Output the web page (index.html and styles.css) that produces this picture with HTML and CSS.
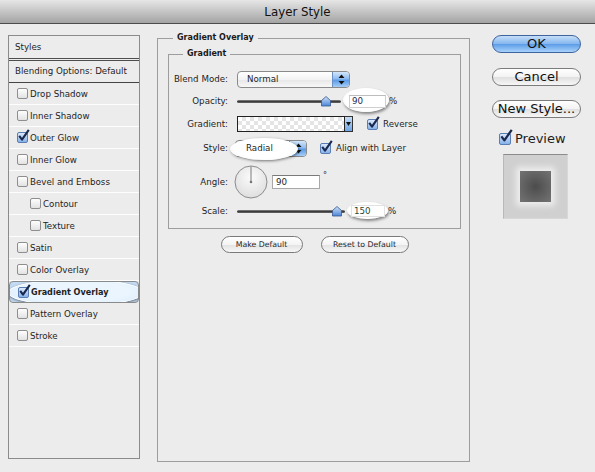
FILE: index.html
```html
<!DOCTYPE html>
<html>
<head>
<meta charset="utf-8">
<title>Layer Style</title>
<link rel="stylesheet" href="styles.css">
</head>
<body>
<div class="titlebar">Layer Style</div>
<div class="content">
  <div class="sidebar">
    <div class="side-head">Styles</div>
    <div class="side-blend">Blending Options: Default</div>
    <div class="side-row"><span class="cb"></span><span class="lbl">Drop Shadow</span></div>
    <div class="side-row"><span class="cb"></span><span class="lbl">Inner Shadow</span></div>
    <div class="side-row"><span class="cb on"><svg class="ck" viewBox="0 0 13 13" width="13" height="13"><path d="M2.2 6.8 L5 10.6 L11.8 0.8" fill="none" stroke="#1a2850" stroke-width="2.1" stroke-linejoin="round"/></svg></span><span class="lbl">Outer Glow</span></div>
    <div class="side-row"><span class="cb"></span><span class="lbl">Inner Glow</span></div>
    <div class="side-row"><span class="cb"></span><span class="lbl">Bevel and Emboss</span></div>
    <div class="side-row sub"><span class="cb"></span><span class="lbl">Contour</span></div>
    <div class="side-row sub"><span class="cb"></span><span class="lbl">Texture</span></div>
    <div class="side-row"><span class="cb"></span><span class="lbl">Satin</span></div>
    <div class="side-row"><span class="cb"></span><span class="lbl">Color Overlay</span></div>
    <div class="side-row sel"><span class="side-halo"></span><span class="cb on"><svg class="ck" viewBox="0 0 13 13" width="13" height="13"><path d="M2.2 6.8 L5 10.6 L11.8 0.8" fill="none" stroke="#1a2850" stroke-width="2.1" stroke-linejoin="round"/></svg></span><span class="lbl">Gradient Overlay</span></div>
    <div class="side-row"><span class="cb"></span><span class="lbl">Pattern Overlay</span></div>
    <div class="side-row"><span class="cb"></span><span class="lbl">Stroke</span></div>
  </div>

  <div class="main">
    <fieldset class="outer">
      <legend>Gradient Overlay</legend>
      <fieldset class="inner">
        <legend>Gradient</legend>
        <div class="form">
          <label>Blend Mode:</label>
          <div class="ctrl">
            <div class="sel sel-normal"><span class="sel-text">Normal</span><span class="step"><svg viewBox="0 0 7 11" width="7" height="11"><path d="M3.5 0.5 L6.5 4 L0.5 4 Z M0.5 7 L6.5 7 L3.5 10.5 Z" fill="#111"/></svg></span></div>
          </div>

          <label>Opacity:</label>
          <div class="ctrl">
            <svg class="slider" viewBox="0 0 104 12" width="104" height="12"><defs><linearGradient id="trk" x1="0" y1="0" x2="0" y2="1"><stop offset="0" stop-color="#8a8a8a"/><stop offset="0.5" stop-color="#3c3c3c"/><stop offset="1" stop-color="#6a6a6a"/></linearGradient><linearGradient id="thm" x1="0" y1="0" x2="0" y2="1"><stop offset="0" stop-color="#cfe2f8"/><stop offset="1" stop-color="#4b86d6"/></linearGradient></defs><rect x="0" y="5" width="104" height="3" rx="1.5" fill="url(#trk)"/><path d="M84.5 11 L84.5 5.5 L89 1.5 L93.5 5.5 L93.5 11 Z" fill="url(#thm)" stroke="#35598f" stroke-width="0.8"/></svg>
            <span class="halo halo-a"><span class="inp inp-a">90</span></span>
            <span class="pct pct-a">%</span>
          </div>

          <label>Gradient:</label>
          <div class="ctrl">
            <span class="swatch"></span><span class="swarrow"><svg viewBox="0 0 5 4" width="5" height="4"><path d="M0 0 L5 0 L2.5 4 Z" fill="#111"/></svg></span>
            <span class="cb on cb-rev"><svg class="ck" viewBox="0 0 13 13" width="13" height="13"><path d="M2.2 6.8 L5 10.6 L11.8 0.8" fill="none" stroke="#1a2850" stroke-width="2.1" stroke-linejoin="round"/></svg></span><span class="cb-text">Reverse</span>
          </div>

          <label>Style:</label>
          <div class="ctrl">
            <div class="sel-wrap"><div class="sel sel-radial"><span class="sel-text">Radial</span><span class="step"><svg viewBox="0 0 7 11" width="7" height="11"><path d="M3.5 0.5 L6.5 4 L0.5 4 Z M0.5 7 L6.5 7 L3.5 10.5 Z" fill="#111"/></svg></span></div></div>
            <span class="cb on cb-align"><svg class="ck" viewBox="0 0 13 13" width="13" height="13"><path d="M2.2 6.8 L5 10.6 L11.8 0.8" fill="none" stroke="#1a2850" stroke-width="2.1" stroke-linejoin="round"/></svg></span><span class="cb-text">Align with Layer</span>
          </div>

          <label>Angle:</label>
          <div class="ctrl">
            <svg class="dial" viewBox="0 0 34 34" width="34" height="34"><defs><radialGradient id="dg" cx="0.5" cy="0.35" r="0.7"><stop offset="0" stop-color="#fbfbfb"/><stop offset="1" stop-color="#dcdcdc"/></radialGradient></defs><circle cx="17" cy="17" r="16" fill="url(#dg)" stroke="#8c8c8c" stroke-width="1"/><line x1="17" y1="1.5" x2="17" y2="17" stroke="#7a7a7a" stroke-width="1"/><circle cx="17" cy="17" r="1.3" fill="#777"/></svg>
            <span class="inp inp-angle">90</span><span class="deg">°</span>
          </div>

          <label>Scale:</label>
          <div class="ctrl">
            <svg class="slider" viewBox="0 0 108 12" width="108" height="12"><rect x="0" y="5" width="108" height="3" rx="1.5" fill="url(#trk)"/><path d="M95.5 11 L95.5 5.5 L100 1.5 L104.5 5.5 L104.5 11 Z" fill="url(#thm)" stroke="#35598f" stroke-width="0.8"/></svg>
            <span class="halo halo-s"><span class="inp inp-s">150</span></span>
            <span class="pct pct-s">%</span>
          </div>
        </div>
      </fieldset>
      <div class="btnrow">
        <span class="btn-sm btn-make">Make Default</span>
        <span class="btn-sm btn-reset">Reset to Default</span>
      </div>
    </fieldset>
  </div>

  <div class="right">
    <span class="btn-big btn-ok">OK</span>
    <span class="btn-big">Cancel</span>
    <span class="btn-big">New Style...</span>
    <div class="preview-row"><span class="cb on cb-prev"><svg class="ck" viewBox="0 0 13 13" width="14" height="14"><path d="M2.2 6.8 L5 10.6 L11.8 0.8" fill="none" stroke="#1a2850" stroke-width="2.1" stroke-linejoin="round"/></svg></span><span class="prev-text">Preview</span></div>
    <div class="preview-box"><div class="preview-square"></div></div>
  </div>
</div>
</body>
</html>
```

FILE: styles.css
```css
* { box-sizing: border-box; }
html, body { margin: 0; padding: 0; }
body {
  width: 595px;
  height: 472px;
  overflow: hidden;
  background: #ececec;
  font-family: "DejaVu Sans", "Noto Sans", sans-serif;
  font-size: 8.7px;
  color: #1e1e1e;
}

.titlebar {
  height: 24px;
  background: linear-gradient(#e6e6e6, #c8c8c8 45%, #a4a4a4);
  border-bottom: 1px solid #4c4c4c;
  text-align: center;
  font-size: 11.8px;
  line-height: 24px;
  color: #111;
}

.content { display: flex; align-items: flex-start; }

/* ---------- sidebar ---------- */
.sidebar {
  margin: 11px 0 0 8px;
  width: 132px;
  height: 424px;
  border: 1px solid #8b8b8b;
}
.side-head {
  height: 25px;
  line-height: 22px;
  padding-left: 6px;
  border-bottom: 3px double #4e4e4e;
}
.side-blend {
  height: 22px;
  line-height: 21px;
  padding-left: 6px;
  border-bottom: 1px solid #444;
}
.side-row {
  height: 22px;
  min-height: 22px;
  border-bottom: 1px solid #fdfdfd;
  display: flex;
  align-items: center;
  padding-left: 8px;
  gap: 2px;
}
.side-row.sub { padding-left: 21px; }
.side-row.sel {
  background: #c4dbf4;
  position: relative;
}
.side-halo {
  position: absolute;
  left: -2px;
  top: -3px;
  width: 136px;
  height: 27px;
  border-radius: 50%;
  background: radial-gradient(ellipse at 50% 45%, #eaf5fe 55%, #d4e9fb);
  border: 1px solid #fff;
  box-shadow: 0 1px 3px rgba(0, 0, 0, 0.5);
}
.side-row.sel .cb, .side-row.sel .lbl { position: relative; z-index: 1; }
.side-row.sel .lbl { font-weight: bold; font-size: 8.1px; }

/* ---------- checkbox ---------- */
.cb {
  flex: none;
  width: 11px;
  height: 11px;
  border: 1px solid #8e8e8e;
  border-radius: 2px;
  background: linear-gradient(#fefefe, #e2e2e2);
  display: flex;
}
.cb.on {
  background: linear-gradient(#dce9fb, #86b2e9);
  border-color: #5a7db4;
}
.ck { flex: none; margin: -4px -4px 0 -1px; }

/* ---------- main ---------- */
.main { margin: 9px 0 0 17px; width: 313px; }
fieldset { margin: 0; min-width: 0; border: 1px solid #9d9d9d; }
legend {
  font-weight: bold;
  font-size: 8px;
  line-height: 10px;
  padding: 0 4px;
  color: #1a1a1a;
}
.outer {
  height: 429px;
  padding: 6px 8px 0 10px;
}
.outer > legend { margin-left: 5px; }
.inner {
  padding: 10px 0 9px 0;
}
.inner > legend { margin-left: 14px; }

.form {
  display: grid;
  grid-template-columns: 59px 1fr;
  grid-template-rows: 20px 24px 22px 26px 42px 16px;
  column-gap: 8px;
  align-items: center;
}
.form label { text-align: right; }
.ctrl { display: flex; align-items: center; }

.sel {
  display: flex;
  height: 17px;
  border: 1px solid #8a8a8a;
  border-radius: 4px;
  background: linear-gradient(#ffffff, #f3f3f3 50%, #e7e7e7 51%, #f8f8f8);
  overflow: hidden;
}
.sel-text { flex: 1; padding-left: 9px; line-height: 15px; position: relative; z-index: 1; }
.step {
  width: 17px;
  background: linear-gradient(#d4e6fb, #8fbcf0 45%, #5b9be6 55%, #a4cdf7);
  border-left: 1px solid #6b90c6;
  display: flex;
  align-items: center;
  justify-content: center;
}
.sel-normal { width: 113px; margin-left: 1px; }
.sel-wrap { position: relative; margin-left: -1px; }
.sel-radial { width: 72px; }
.sel-radial .sel-text { padding-left: 10px; }
.sel-wrap::after {
  content: "";
  position: absolute;
  left: -5px;
  top: -2px;
  width: 68px;
  height: 22px;
  border-radius: 50%;
  background: radial-gradient(ellipse at 50% 45%, #ffffff 60%, #eeeeee);
  box-shadow: 1px 1px 3px rgba(0, 0, 0, 0.5);
}

.slider { flex: none; margin-left: 1px; }

.halo { position: relative; display: inline-flex; }
.halo::before {
  content: "";
  position: absolute;
  border-radius: 50%;
  background: radial-gradient(ellipse at 50% 45%, #ffffff 62%, #efefef);
  box-shadow: 1px 2px 3px rgba(0, 0, 0, 0.45);
  z-index: -1;
}
.halo-a { margin-left: 8px; }
.halo-a::before { left: -6px; right: -3px; top: -7px; bottom: -4px; }
.halo-s { margin-left: 6px; }
.halo-s::before { left: -4px; right: -3px; top: -3px; bottom: -2px; }

.inp {
  display: block;
  background: #fff;
  border: 1px solid #a8a8a8;
  border-top-color: #7a7a7a;
  height: 13px;
  line-height: 11px;
  padding-left: 2px;
  color: #1b2b55;
}
.inp-a { width: 37px; border-color: #cfcfcf; border-top-color: #bdbdbd; }
.inp-s { width: 34px; height: 12px; line-height: 10px; border-color: #e2e2e2; color: #1f4a3a; }
.inp-angle { width: 48px; height: 14px; line-height: 12px; margin-left: 4px; color: #1e1e1e; padding-left: 3px; }
.pct { margin-left: 3px; }
.pct-s { margin-left: 3px; }
.deg { align-self: flex-start; margin: 6px 0 0 3px; font-size: 8px; }

.dial { flex: none; margin-left: -2px; }

.swatch {
  width: 108px;
  height: 16px;
  margin-left: 1px;
  border: 1px solid #222;
  background: conic-gradient(#e4e4e4 25%, #ffffff 0 50%, #e4e4e4 0 75%, #ffffff 0) 0 0 / 8px 8px;
}
.swarrow {
  width: 8px;
  height: 16px;
  border: 1px solid #333;
  border-left: none;
  background: linear-gradient(#c7ddf7, #6fa5e6);
  display: flex;
  align-items: center;
  justify-content: center;
}
.cb-rev { margin-left: 14px; }
.cb-align { margin-left: 13px; }
.cb-text { margin-left: 5px; }

.btnrow {
  display: flex;
  justify-content: center;
  gap: 18px;
  margin-top: 7px;
}
.btn-sm {
  height: 17px;
  border: 1px solid #7a7a7a;
  border-radius: 9px;
  background: linear-gradient(#ffffff, #f4f4f4 50%, #e2e2e2 51%, #f7f7f7);
  font-size: 7.8px;
  line-height: 15px;
  text-align: center;
}
.btn-make { width: 82px; }
.btn-reset { width: 88px; }

/* ---------- right column ---------- */
.right {
  margin: 11px 0 0 22px;
  width: 89px;
  display: flex;
  flex-direction: column;
}
.btn-big {
  height: 18px;
  border: 1px solid #7c7c7c;
  border-radius: 9px;
  background: linear-gradient(#ffffff, #f3f3f3 50%, #e0e0e0 51%, #f6f6f6);
  font-size: 13px;
  line-height: 16px;
  text-align: center;
  color: #111;
}
.btn-big + .btn-big { margin-top: 14.5px; }
.btn-ok {
  background: linear-gradient(#c6def8, #86b7ef 48%, #5d9de8 52%, #a9d2fb);
  border-color: #3e64a0;
}
.preview-row {
  display: flex;
  align-items: center;
  gap: 4px;
  margin: 14px 0 0 7px;
  font-size: 13px;
  line-height: 13px;
}
.cb-prev { width: 12px; height: 12px; }
.cb-prev .ck { margin: -5px -5px 0 -1px; }
.preview-box {
  width: 65px;
  height: 65px;
  margin: 9px 0 0 11px;
  background: #d0d0d0;
  border-top: 1px solid #8c8c8c;
  border-left: 1px solid #b8b8b8;
  border-right: 1px solid #d8d8d8;
  border-bottom: 1px solid #d8d8d8;
  display: flex;
  align-items: center;
  justify-content: center;
}
.preview-square {
  width: 31px;
  height: 31px;
  background: radial-gradient(circle, #4c4c4c, #666666 65%, #737373);
  box-shadow: 0 0 6px 4px rgba(242, 242, 242, 0.85);
}
```
